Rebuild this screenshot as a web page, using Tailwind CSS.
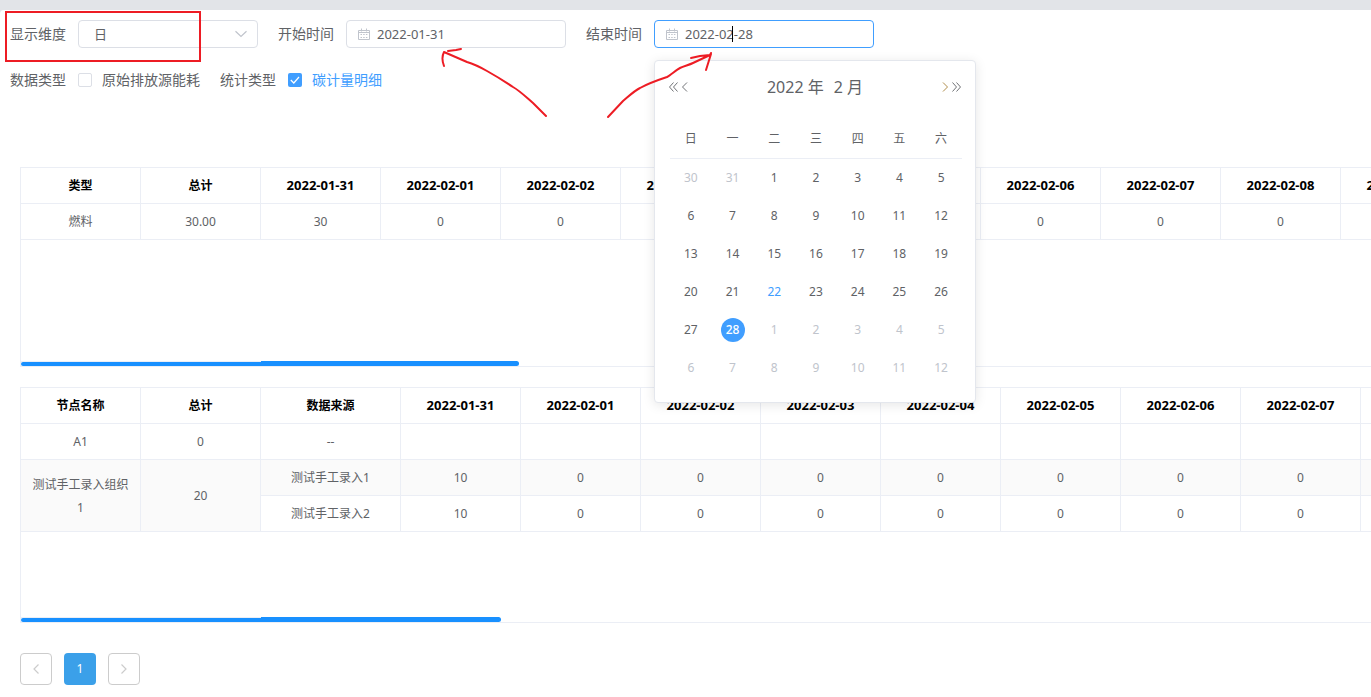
<!DOCTYPE html>
<html lang="zh-CN">
<head>
<meta charset="utf-8">
<meta name="viewport" content="width=device-width, initial-scale=1">
<title>碳计量明细</title>
<script src="https://cdn.jsdelivr.net/npm/@tailwindcss/browser@4"></script>
</head>
<body class="relative min-h-screen overflow-x-hidden bg-[#e2e4e8] pt-2.5 font-['Noto_Sans','Noto_Sans_CJK_SC',sans-serif] text-sm text-[#606266]">
<main class="min-h-[calc(100vh-10px)] rounded-tl bg-white pt-2.5">

  <form class="px-2.5">
    <div class="flex items-center gap-5">
      <div class="flex items-center gap-3">
        <label for="dim">显示维度</label>
        <div class="relative w-45">
          <select id="dim" class="h-7 w-full appearance-none rounded border border-[#dcdfe6] bg-white px-[15px] text-[13px] outline-none"><option>日</option></select>
          <svg class="pointer-events-none absolute top-[7px] right-2.5 size-3.5" viewBox="0 0 14 14" fill="none" stroke="#c0c4cc" stroke-width="1.2" aria-hidden="true"><path d="M1.5 4.2l5.5 5.3 5.5-5.3"/></svg>
        </div>
      </div>
      <div class="flex items-center gap-3">
        <label for="start">开始时间</label>
        <div class="relative w-55">
          <svg class="pointer-events-none absolute top-2 left-3 size-3" viewBox="0 0 12 12" fill="none" stroke="#c0c4cc" aria-hidden="true"><path d="M.5 2.5h11v9H.5zM.5 4.5h11M3.5.5v3M8.5.5v3"/><path d="M2.5 6.5h7M2.5 9.5h7" stroke-dasharray="1.5 1.2"/></svg>
          <input id="start" type="text" value="2022-01-31" class="h-7 w-full rounded border border-[#dcdfe6] bg-white pr-3 pl-[30px] text-[13px] outline-none">
        </div>
      </div>
      <div class="flex items-center gap-3">
        <label for="end">结束时间</label>
        <div class="relative w-55">
          <svg class="pointer-events-none absolute top-2 left-3 size-3" viewBox="0 0 12 12" fill="none" stroke="#c0c4cc" aria-hidden="true"><path d="M.5 2.5h11v9H.5zM.5 4.5h11M3.5.5v3M8.5.5v3"/><path d="M2.5 6.5h7M2.5 9.5h7" stroke-dasharray="1.5 1.2"/></svg>
          <input id="end" type="text" value="2022-02-28" class="h-7 w-full rounded border border-[#409eff] bg-white pr-3 pl-[30px] text-[13px] outline-none">
          <span class="absolute top-1.5 left-[78px] h-4 w-px bg-black"></span>

          <div class="absolute top-10 left-0 z-10 w-[322px] rounded border border-[#e4e7ed] bg-white pb-[15px] shadow-[0_2px_12px_0_rgba(0,0,0,0.1)]">
            <div class="mx-3.5 mt-[11px] flex h-[30px] items-center">
              <div class="flex flex-1 gap-0.5">
                <button type="button" aria-label="前一年"><svg class="block h-3 w-2.5" viewBox="0 0 10 12" fill="none" stroke="currentColor" stroke-width=".9"><path d="M4.5 1.5L.5 6l4 4.5M8.5 1.5L4.5 6l4 4.5"/></svg></button>
                <button type="button" aria-label="上个月"><svg class="block h-3 w-2.5" viewBox="0 0 10 12" fill="none" stroke="currentColor" stroke-width=".9"><path d="M6 1.5L1.5 6 6 10.5"/></svg></button>
              </div>
              <div class="flex gap-2.5 text-base"><button type="button">2022 年</button><button type="button">2 月</button></div>
              <div class="flex flex-1 justify-end gap-0.5">
                <button type="button" aria-label="下个月" class="text-[#a57f35]"><svg class="block h-3 w-2.5" viewBox="0 0 10 12" fill="none" stroke="currentColor" stroke-width=".9"><path d="M4 1.5L8.5 6 4 10.5"/></svg></button>
                <button type="button" aria-label="后一年"><svg class="block h-3 w-2.5" viewBox="0 0 10 12" fill="none" stroke="currentColor" stroke-width=".9"><path d="M1.5 1.5l4 4.5-4 4.5M5.5 1.5l4 4.5-4 4.5"/></svg></button>
              </div>
            </div>
            <table class="mt-4 ml-[15px] w-[292px] table-fixed border-separate border-spacing-0 text-center text-xs [&_td]:h-[38px] [&_td]:p-0 [&_th]:h-[41px] [&_th]:border-b [&_th]:border-[#ebeef5] [&_th]:px-0 [&_th]:pt-0.5 [&_th]:pb-0 [&_th]:font-normal">
              <thead><tr><th>日</th><th>一</th><th>二</th><th>三</th><th>四</th><th>五</th><th>六</th></tr></thead>
              <tbody>
                <tr><td class="text-[#c0c4cc]">30</td><td class="text-[#c0c4cc]">31</td><td>1</td><td>2</td><td>3</td><td>4</td><td>5</td></tr>
                <tr><td>6</td><td>7</td><td>8</td><td>9</td><td>10</td><td>11</td><td>12</td></tr>
                <tr><td>13</td><td>14</td><td>15</td><td>16</td><td>17</td><td>18</td><td>19</td></tr>
                <tr><td>20</td><td>21</td><td class="text-[#409eff]">22</td><td>23</td><td>24</td><td>25</td><td>26</td></tr>
                <tr><td>27</td><td><span class="mx-auto block size-6 rounded-full bg-[#409eff] leading-6 font-medium text-white">28</span></td><td class="text-[#c0c4cc]">1</td><td class="text-[#c0c4cc]">2</td><td class="text-[#c0c4cc]">3</td><td class="text-[#c0c4cc]">4</td><td class="text-[#c0c4cc]">5</td></tr>
                <tr class="text-[#c0c4cc]"><td>6</td><td>7</td><td>8</td><td>9</td><td>10</td><td>11</td><td>12</td></tr>
              </tbody>
            </table>
          </div>
        </div>
      </div>
    </div>

    <div class="mt-5 flex h-6 items-center gap-5">
      <div class="flex items-center gap-3">
        <span>数据类型</span>
        <label class="flex items-center gap-2.5"><input type="checkbox" class="size-3.5 appearance-none rounded-xs border border-[#dcdfe6] bg-white">原始排放源能耗</label>
      </div>
      <div class="flex items-center gap-3">
        <span>统计类型</span>
        <label class="flex items-center gap-2.5 text-[#409eff]">
          <span class="relative size-3.5">
            <input type="checkbox" checked class="block size-3.5 appearance-none rounded-xs bg-[#409eff]">
            <svg class="pointer-events-none absolute inset-0 size-3.5" viewBox="0 0 14 14" fill="none" stroke="#fff" stroke-width="1.2" aria-hidden="true"><path d="M2.8 7l3 3 5.2-6"/></svg>
          </span>碳计量明细</label>
      </div>
    </div>
  </form>

  <section class="mt-[75px] ml-5 flex h-[200px] flex-col justify-between overflow-hidden border-t border-b border-l border-[#ebeef5]">
    <table class="w-[1440px] table-fixed border-separate border-spacing-0 text-center text-xs [&_td]:h-9 [&_td]:border-r [&_td]:border-b [&_td]:border-[#ebeef5] [&_td]:p-0 [&_th]:h-9 [&_th]:border-r [&_th]:border-b [&_th]:border-[#ebeef5] [&_th]:p-0 [&_th]:font-bold [&_th]:text-black">
      <thead><tr><th>类型</th><th>总计</th><th class="text-[13px]">2022-01-31</th><th class="text-[13px]">2022-02-01</th><th class="text-[13px]">2022-02-02</th><th class="text-[13px]">2022-02-03</th><th class="text-[13px]">2022-02-04</th><th class="text-[13px]">2022-02-05</th><th class="text-[13px]">2022-02-06</th><th class="text-[13px]">2022-02-07</th><th class="text-[13px]">2022-02-08</th><th class="text-[13px]">2022-02-09</th></tr></thead>
      <tbody><tr><td>燃料</td><td>30.00</td><td>30</td><td>0</td><td>0</td><td>0</td><td>0</td><td>0</td><td>0</td><td>0</td><td>0</td><td>0</td></tr></tbody>
    </table>
    <div class="flex items-end">
      <div class="w-60 border-t border-[#ebeef5]"><div class="h-1 rounded-l-xs bg-[#1890ff]"></div></div>
      <div class="h-[5px] w-[258px] rounded-r-sm bg-[#1890ff]"></div>
    </div>
  </section>

  <section class="mt-5 ml-5 flex h-[236px] flex-col justify-between overflow-hidden border-t border-b border-l border-[#ebeef5]">
    <table class="w-[1460px] table-fixed border-separate border-spacing-0 text-center text-xs [&_td]:h-9 [&_td]:border-r [&_td]:border-b [&_td]:border-[#ebeef5] [&_td]:px-2.5 [&_td]:py-0 [&_th]:h-9 [&_th]:border-r [&_th]:border-b [&_th]:border-[#ebeef5] [&_th]:p-0 [&_th]:font-bold [&_th]:text-black">
      <colgroup><col class="w-30"><col class="w-30"><col class="w-35"><col span="9" class="w-30"></colgroup>
      <thead><tr><th>节点名称</th><th>总计</th><th>数据来源</th><th class="text-[13px]">2022-01-31</th><th class="text-[13px]">2022-02-01</th><th class="text-[13px]">2022-02-02</th><th class="text-[13px]">2022-02-03</th><th class="text-[13px]">2022-02-04</th><th class="text-[13px]">2022-02-05</th><th class="text-[13px]">2022-02-06</th><th class="text-[13px]">2022-02-07</th><th class="text-[13px]">2022-02-08</th></tr></thead>
      <tbody>
        <tr><td>A1</td><td>0</td><td>--</td><td></td><td></td><td></td><td></td><td></td><td></td><td></td><td></td><td></td></tr>
        <tr class="bg-[#fafafa]"><td rowspan="2" class="leading-[23px]">测试手工录入组织1</td><td rowspan="2">20</td><td>测试手工录入1</td><td>10</td><td>0</td><td>0</td><td>0</td><td>0</td><td>0</td><td>0</td><td>0</td><td>0</td></tr>
        <tr><td>测试手工录入2</td><td>10</td><td>0</td><td>0</td><td>0</td><td>0</td><td>0</td><td>0</td><td>0</td><td>0</td></tr>
      </tbody>
    </table>
    <div class="flex items-end">
      <div class="w-60 border-t border-[#ebeef5]"><div class="h-1 rounded-l-xs bg-[#1890ff]"></div></div>
      <div class="h-[5px] w-60 rounded-r-sm bg-[#1890ff]"></div>
    </div>
  </section>

  <nav class="mt-[30px] ml-5 flex gap-3 pb-3 text-xs" aria-label="分页">
    <button type="button" aria-label="上一页" class="flex size-8 items-center justify-center rounded border border-[#ccc]"><svg class="size-3" viewBox="0 0 12 12" fill="none" stroke="#ccc" stroke-width="1.2" aria-hidden="true"><path d="M8.5 1.5L4 6l4.500 4.500"/></svg></button>
    <button type="button" class="size-8 rounded bg-[#3ba0e9] text-white">1</button>
    <button type="button" aria-label="下一页" class="flex size-8 items-center justify-center rounded border border-[#ccc]"><svg class="size-3" viewBox="0 0 12 12" fill="none" stroke="#ccc" stroke-width="1.2" aria-hidden="true"><path d="M3.500 1.500L8 6l-4.500 4.500"/></svg></button>
  </nav>
</main>

<!-- Hand-drawn annotations: highlight box and two arrows -->
<svg class="pointer-events-none absolute top-0 left-0 z-20" width="720" height="125" viewBox="0 0 720 125" fill="none" stroke="#ed1c24" stroke-width="2" stroke-linecap="round" stroke-linejoin="round" aria-hidden="true">
  <rect x="6" y="12" width="194" height="49" stroke-linejoin="miter"/>
  <path d="M546 116L533 103C526 97 520 91 513 87C504 81 496 76 487 71C480 67 474 64 467 62L444 52M461 49L456 50L448 51M444 52C442 56 442 61 444 66"/>
  <path d="M608 117L623 101C629 96 634 91 640 88C649 83 658 80 667 77C671 75 676 70 680 68C684 66 689 65 693 63L710 55M691 58L700 56L710 55L711 53M711 54L706 70"/>
</svg>
</body>
</html>
